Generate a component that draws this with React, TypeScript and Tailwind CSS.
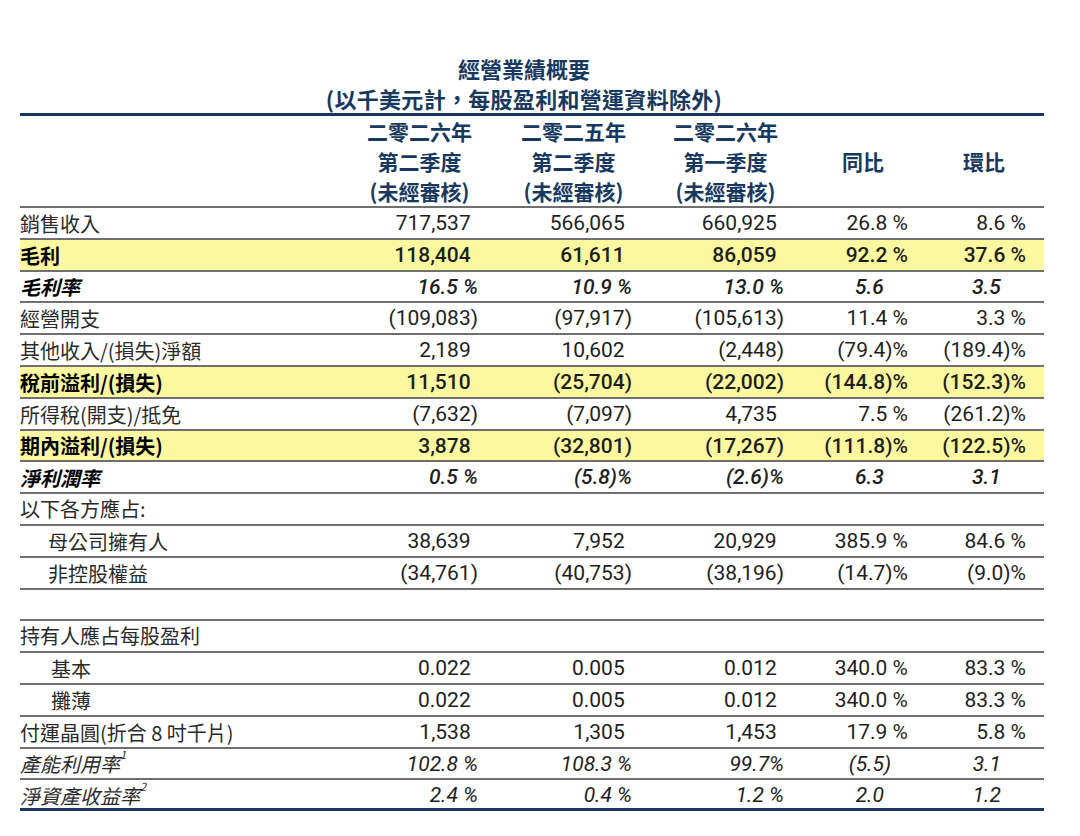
import React from 'react';

type RowKind = 'normal' | 'bold' | 'boldItalic' | 'italic' | 'indent' | 'blank' | 'section';

interface Row {
  label: string;
  kind: RowKind;
  vals?: string[];
  sup?: string;
  indent?: string;
}

const rows: Row[] = [
  { label: '銷售收入', kind: 'normal', vals: ['717,537', '566,065', '660,925', '26.8 %', '8.6 %'] },
  { label: '毛利', kind: 'bold', vals: ['118,404', '61,611', '86,059', '92.2 %', '37.6 %'] },
  { label: '毛利率', kind: 'boldItalic', vals: ['16.5 %', '10.9 %', '13.0 %', '5.6', '3.5'] },
  { label: '經營開支', kind: 'normal', vals: ['(109,083)', '(97,917)', '(105,613)', '11.4 %', '3.3 %'] },
  { label: '其他收入/(損失)淨額', kind: 'normal', vals: ['2,189', '10,602', '(2,448)', '(79.4)%', '(189.4)%'] },
  { label: '稅前溢利/(損失)', kind: 'bold', vals: ['11,510', '(25,704)', '(22,002)', '(144.8)%', '(152.3)%'] },
  { label: '所得稅(開支)/抵免', kind: 'normal', vals: ['(7,632)', '(7,097)', '4,735', '7.5 %', '(261.2)%'] },
  { label: '期內溢利/(損失)', kind: 'bold', vals: ['3,878', '(32,801)', '(17,267)', '(111.8)%', '(122.5)%'] },
  { label: '淨利潤率', kind: 'boldItalic', vals: ['0.5 %', '(5.8)%', '(2.6)%', '6.3', '3.1'] },
  { label: '以下各方應占:', kind: 'section' },
  { label: '母公司擁有人', kind: 'indent', indent: 'pl-[28px]', vals: ['38,639', '7,952', '20,929', '385.9 %', '84.6 %'] },
  { label: '非控股權益', kind: 'indent', indent: 'pl-[28px]', vals: ['(34,761)', '(40,753)', '(38,196)', '(14.7)%', '(9.0)%'] },
  { label: '', kind: 'blank' },
  { label: '持有人應占每股盈利', kind: 'section' },
  { label: '基本', kind: 'indent', indent: 'pl-[31px]', vals: ['0.022', '0.005', '0.012', '340.0 %', '83.3 %'] },
  { label: '攤薄', kind: 'indent', indent: 'pl-[31px]', vals: ['0.022', '0.005', '0.012', '340.0 %', '83.3 %'] },
  { label: '付運晶圓(折合 8 吋千片)', kind: 'normal', vals: ['1,538', '1,305', '1,453', '17.9 %', '5.8 %'] },
  { label: '產能利用率', kind: 'italic', sup: '1', vals: ['102.8 %', '108.3 %', '99.7%', '(5.5)', '3.1'] },
  { label: '淨資產收益率', kind: 'italic', sup: '2', vals: ['2.4 %', '0.4 %', '1.2 %', '2.0', '1.2'] },
];

const cjk = "font-['Noto_Sans_CJK_TC','Noto_Sans_CJK_SC',sans-serif]";
const num = "font-['Roboto','Liberation_Sans',sans-serif]";

// closing paren kept invisible so plain numbers line up with bracketed ones
const Spacer = () => <span className="invisible">)</span>;

const Value: React.FC<{ v: string; col: number; kind: RowKind }> = ({ v, col, kind }) => {
  const isPct = v.endsWith('%');
  const closed = v.endsWith(')');
  const weight = kind === 'bold' || kind === 'boldItalic' ? 'font-medium' : 'font-normal';
  const slant = kind === 'boldItalic' || kind === 'italic' ? 'italic' : '';
  let pad = '';
  if (col >= 3 && !isPct) pad = col === 3 ? 'pr-[17px]' : 'pr-[18px]';
  return (
    <div className={`text-right whitespace-nowrap ${pad}`}>
      <span className={`${num} text-[21px] text-[#1e1e1e] ${weight} ${slant}`}>
        {v}
        {!isPct && !closed && <Spacer />}
      </span>
    </div>
  );
};

const HeadCol: React.FC<{ lines: string[] }> = ({ lines }) => (
  <div className="flex justify-end pr-[6px]">
    <div className="flex flex-col items-center">
      {lines.map((l) => (
        <div key={l} className="h-[30px] leading-[30px]">{l}</div>
      ))}
    </div>
  </div>
);

export default function App() {
  return (
    <div className="w-[1080px] h-[836px] bg-white overflow-hidden">
      <div className="pt-[52px] pl-[20px] w-[1044px]">
        <div className={`${cjk} text-[#18395f] font-bold text-[22px] text-center pr-[16px]`}>
          <div className="h-[32px] leading-[32px]">經營業績概要</div>
          <div className="h-[29px] leading-[29px] tracking-[0.3px]">(以千美元計，每股盈利和營運資料除外)</div>
        </div>
        <div className="h-[3px] bg-[#1b3560]" />

        <div className={`grid grid-cols-[320px_138px_154px_152px_124px_118px] pr-[18px] h-[92px] border-b-2 border-[#6f6f6f] ${cjk} text-[21px] font-bold text-[#18395f]`}>
          <div />
          <HeadCol lines={['二零二六年', '第二季度', '(未經審核)']} />
          <HeadCol lines={['二零二五年', '第二季度', '(未經審核)']} />
          <HeadCol lines={['二零二六年', '第一季度', '(未經審核)']} />
          <div className="flex items-center justify-end pr-[24px] pt-[2px]">同比</div>
          <div className="flex items-center justify-end pr-[21px] pt-[2px]">環比</div>
        </div>

        {rows.map((r, i) => {
          const last = i === rows.length - 1;
          const bg = r.kind === 'bold' ? 'bg-[#fcf8a0]' : 'bg-white';
          const border = last ? 'border-b-[3px] border-[#1b3560]' : 'border-b-2 border-[#6f6f6f]';
          const labelStyle =
            r.kind === 'bold'
              ? 'font-bold text-black'
              : r.kind === 'boldItalic'
              ? 'font-bold italic text-black'
              : r.kind === 'italic'
              ? 'italic text-[#2a2a2a]'
              : 'text-[#2a2a2a]';
          return (
            <div
              key={i}
              className={`grid grid-cols-[320px_138px_154px_152px_124px_118px] pr-[18px] items-center ${last ? 'h-[31px]' : 'h-[31.8px]'} ${bg} ${border}`}
            >
              <div className={`${cjk} text-[20px] leading-none whitespace-nowrap ${labelStyle} ${r.indent ?? ''}`}>
                {r.label}
                {r.sup && <sup className="text-[11px] italic align-super">{r.sup}</sup>}
              </div>
              {r.vals?.map((v, c) => <Value key={c} v={v} col={c} kind={r.kind} />)}
            </div>
          );
        })}
      </div>
    </div>
  );
}
